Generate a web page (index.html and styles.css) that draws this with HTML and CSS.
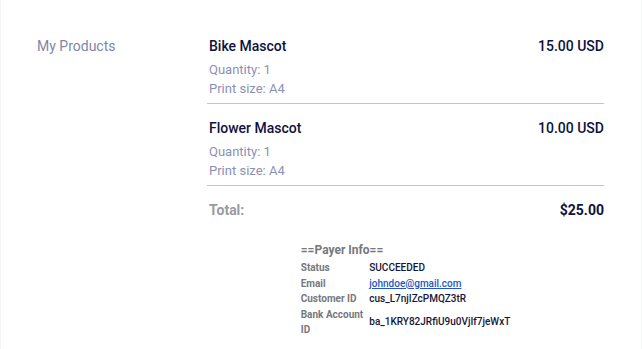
FILE: index.html
```html
<!DOCTYPE html>
<html>
<head>
<meta charset="utf-8">
<link rel="stylesheet" href="styles.css">
</head>
<body>
<div class="page">
  <div class="section">
    <div class="label">My Products</div>
    <div class="products">
      <div class="item">
        <div class="item-head"><span class="name">Bike Mascot</span><span class="price">15.00 USD</span></div>
        <div class="meta">Quantity: 1</div>
        <div class="meta">Print size: A4</div>
      </div>
      <div class="item">
        <div class="item-head"><span class="name">Flower Mascot</span><span class="price">10.00 USD</span></div>
        <div class="meta">Quantity: 1</div>
        <div class="meta">Print size: A4</div>
      </div>
      <div class="total"><span class="total-label">Total:</span><span class="total-value">$25.00</span></div>
      <table class="payer">
        <tr><th colspan="2" class="payer-title">==Payer Info==</th></tr>
        <tr><td class="k">Status</td><td class="v">SUCCEEDED</td></tr>
        <tr><td class="k">Email</td><td class="v"><a href="#">johndoe@gmail.com</a></td></tr>
        <tr><td class="k">Customer ID</td><td class="v">cus_L7njIZcPMQZ3tR</td></tr>
        <tr><td class="k">Bank Account<br>ID</td><td class="v">ba_1KRY82JRfiU9u0VjIf7jeWxT</td></tr>
      </table>
    </div>
  </div>
</div>
</body>
</html>
```

FILE: styles.css
```css
html, body {
  margin: 0;
  padding: 0;
  background: #f4f4fb;
}
.page {
  margin: 0 1px;
  background: #ffffff;
  min-height: 349px;
  font-family: Roboto, "Liberation Sans", sans-serif;
}
.section {
  display: grid;
  grid-template-columns: 170px 1fr;
  padding: 36px 37px 0 36px;
}
.label {
  color: #7e86a8;
  font-size: 14px;
  line-height: 20px;
}
.products {
  display: flex;
  flex-direction: column;
}
.item {
  border-bottom: 1px solid #c4c4c4;
  padding: 0 0 5px 2px;
  margin-bottom: 14px;
}
.item-head {
  display: flex;
  justify-content: space-between;
  font-size: 14px;
  line-height: 20px;
  color: #0e1240;
  font-weight: 500;
  margin-bottom: 4px;
}
.meta {
  font-size: 13px;
  line-height: 19px;
  color: #8a91b6;
}
.total {
  display: flex;
  justify-content: space-between;
  font-size: 14px;
  line-height: 20px;
  font-weight: 700;
  padding-left: 2px;
}
.total-label {
  color: #999aa2;
}
.total-value {
  color: #0e1240;
}
.payer {
  margin: 20px auto 0;
  border-collapse: collapse;
  font-size: 10px;
}
.payer th.payer-title {
  text-align: left;
  font-size: 12px;
  font-weight: 700;
  color: #77777d;
  line-height: 20px;
  padding: 0;
}
.payer td {
  padding: 0;
  line-height: 15.5px;
  vertical-align: middle;
}
.payer td.k {
  font-weight: 700;
  color: #77777d;
  padding-right: 6px;
}
.payer td.v {
  color: #14163a;
  font-weight: 500;
}
.payer a {
  color: #2456c8;
  text-decoration: underline;
}
```
